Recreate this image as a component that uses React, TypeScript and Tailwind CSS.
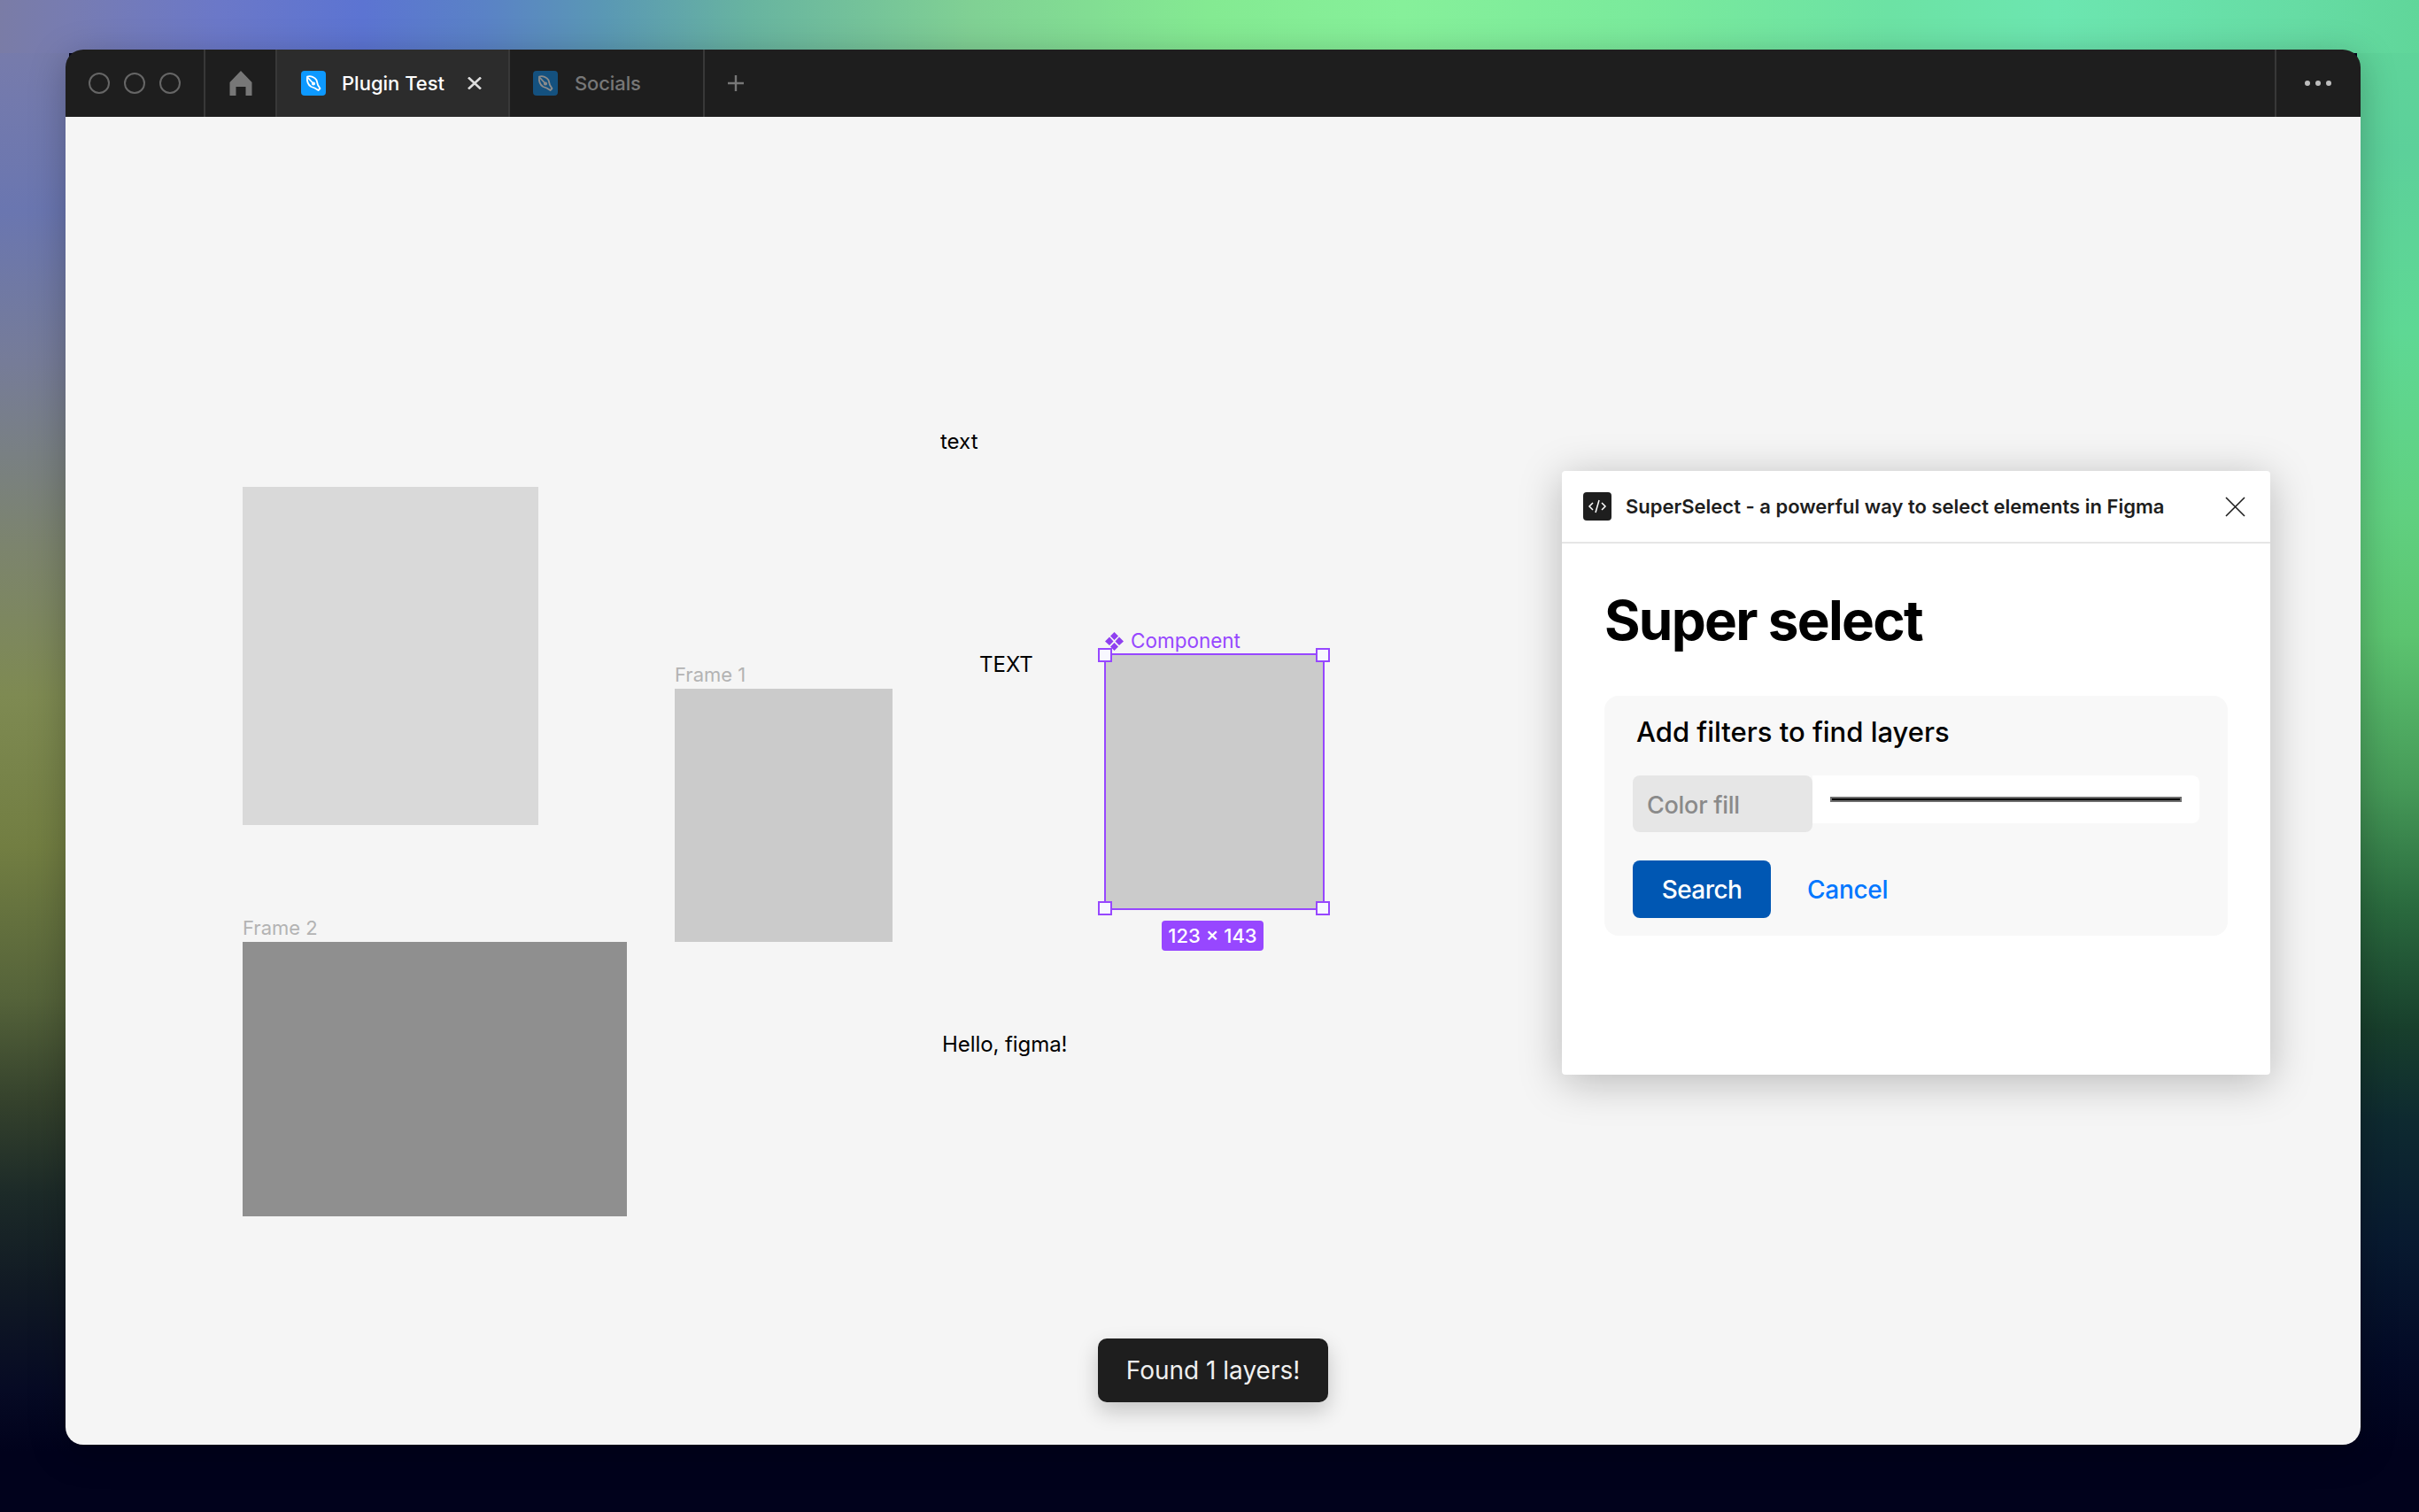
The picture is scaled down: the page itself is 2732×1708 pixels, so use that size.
const font = "font-['Inter','Liberation_Sans',sans-serif]";

function Feather({ dim }: { dim?: boolean }) {
  return (
    <div className={`w-[28px] h-[28px] rounded-[4px] flex items-center justify-center ${dim ? "bg-[#14517f]" : "bg-[#0d99ff]"}`}>
      <svg width="22" height="22" viewBox="0 0 22 22" fill="none" stroke={dim ? "#8c8c8c" : "#ffffff"} strokeWidth="1.8" strokeLinejoin="round" strokeLinecap="round">
        <path d="M4 3.5 C8 2.5 12.5 4 14.5 7.5 L16 13 L18.5 17 L16.5 19 L12.5 16.5 L8.5 15 C5 13 3.5 8 4 3.5 Z" />
        <path d="M5 5 L11 11.5" />
        <circle cx="11" cy="11.5" r="1.2" />
      </svg>
    </div>
  );
}

function Handle({ pos }: { pos: string }) {
  return <div className={`absolute w-[16px] h-[16px] bg-[#f8f8ff] border-2 border-[#9747ff] ${pos}`} />;
}

export default function App() {
  return (
    <div className={`relative w-[2732px] h-[1708px] overflow-hidden bg-[#01021c] ${font} bg-no-repeat [background-size:100%_60px,78px_100%,70px_100%] [background-position:0_0,0_0,100%_0] bg-[linear-gradient(90deg,#7a7ca6_0%,#777cb2_3%,#6b78c8_9%,#5c74d2_15%,#5a82c6_20%,#5a98b4_25%,#68b4a0_31%,#80d094_40%,#84ea92_50%,#86f09a_58%,#7aea9c_68%,#6ce2a4_78%,#6ce6b0_85%,#66dca4_95%,#60d69a_100%),linear-gradient(180deg,#7a7ca6_0%,#767bac_4%,#6a76b0_14%,#767c98_24%,#7c846e_36%,#7e8a52_46%,#727e42_56%,#55633a_66%,#34412c_73%,#1c2a28_79%,#111a24_85%,#060a24_92%,#01021c_96%),linear-gradient(180deg,#60d69a_0%,#5cd09a_10%,#5ed894_22%,#60d080_34%,#5cc470_42%,#469a58_52%,#2a6a3e_60%,#183f2c_68%,#0e2a30_74%,#081a30_82%,#030a26_90%,#01021c_96%)]`}>
      <div className="absolute left-[74px] top-[56px] w-[2592px] h-[1576px] rounded-[20px] overflow-hidden flex flex-col shadow-[0_8px_40px_rgba(0,0,0,0.25)]">
        <div className="h-[76px] bg-[#1e1e1e] flex items-stretch shrink-0 text-[22px]">
          <div className="w-[158px] flex items-center pl-[26px] gap-[16px] border-r-2 border-[#383838]">
            <div className="w-[24px] h-[24px] rounded-full border-2 border-[#666666]" />
            <div className="w-[24px] h-[24px] rounded-full border-2 border-[#666666]" />
            <div className="w-[24px] h-[24px] rounded-full border-2 border-[#666666]" />
          </div>
          <div className="w-[81px] flex items-center justify-center border-r-2 border-[#383838]">
            <svg width="26" height="28" viewBox="0 0 26 28" fill="#777777"><path fillRule="evenodd" d="M13 0 L25.5 13 V28 H18.5 V18 H7.5 V28 H0.5 V13 Z" /></svg>
          </div>
          <div className="w-[263px] bg-[#2c2c2c] flex items-center pl-[27px] border-r-2 border-[#383838]">
            <Feather />
            <span className="ml-[18px] w-[142px] font-medium text-white">Plugin Test</span>
            <svg width="16" height="14" viewBox="0 0 16 14" stroke="#dddddd" strokeWidth="2.6"><path d="M1 0.5 L15 13.5 M15 0.5 L1 13.5" /></svg>
          </div>
          <div className="w-[220px] flex items-center pl-[26px] border-r-2 border-[#383838]">
            <Feather dim />
            <span className="ml-[19px] font-medium text-[#777777] tracking-[-0.005em]">Socials</span>
          </div>
          <div className="flex-1 flex items-center pl-[25px] ">
            <svg width="20" height="20" viewBox="0 0 20 20" stroke="#777777" strokeWidth="2.4"><path d="M10 1 V19 M1 10 H19" /></svg>
          </div>
          <div className="w-[97px] flex items-center justify-center gap-[6px] border-l-2 border-[#383838] pr-[2px]">
            <div className="w-[6px] h-[6px] rounded-full bg-[#bdbdbd]" />
            <div className="w-[6px] h-[6px] rounded-full bg-[#bdbdbd]" />
            <div className="w-[6px] h-[6px] rounded-full bg-[#bdbdbd]" />
          </div>
        </div>
        <div className="relative flex-1 bg-[#f5f5f5]">
          {/* canvas items: coordinates relative to (74,132) */}
          <div className="absolute left-[200px] top-[418px] w-[334px] h-[382px] bg-[#d9d9d9]" />
          <div className="absolute left-[688px] top-[618px] text-[22px] leading-[24px] text-[#b3b3b3]">Frame 1</div>
          <div className="absolute left-[688px] top-[646px] w-[246px] h-[286px] bg-[#cbcbcb]" />
          <div className="absolute left-[200px] top-[904px] text-[22px] leading-[24px] text-[#b3b3b3]">Frame 2</div>
          <div className="absolute left-[200px] top-[932px] w-[434px] h-[310px] bg-[#8f8f8f]" />
          <div className="absolute left-[988px] top-[352px] text-[24px] leading-[30px] text-black">text</div>
          <div className="absolute left-[1032px] top-[604px] text-[24px] leading-[30px] text-black">TEXT</div>
          <div className="absolute left-[990px] top-[1033px] text-[24px] leading-[30px] text-black tracking-[-0.003em]">Hello, figma!</div>

          <div className="absolute left-[1174px] top-[580px] flex items-center gap-[8px] text-[22.5px] leading-[24px] text-[#9747ff]">
            <svg width="21" height="21" viewBox="0 0 21 21" fill="#8f3ff0"><path d="M10.5 0 L15 4.5 L10.5 9 L6 4.5 Z M16 5.5 L21 10.5 L16 15 L11.5 10.5 Z M5 5.5 L9.5 10.5 L5 15 L0 10.5 Z M10.5 12 L15 16.5 L10.5 21 L6 16.5 Z" /></svg>
            <span>Component</span>
          </div>
          <div className="absolute left-[1173px] top-[606px] w-[249px] h-[290px] bg-[#cbcbcb] border-2 border-[#9747ff]">
            <Handle pos="left-[-9px] top-[-8px]" />
            <Handle pos="right-[-8px] top-[-8px]" />
            <Handle pos="left-[-9px] bottom-[-8px]" />
            <Handle pos="right-[-8px] bottom-[-8px]" />
          </div>
          <div className="absolute left-[1238px] top-[908px] w-[115px] h-[34px] rounded-[4px] bg-[#9747ff] text-white text-[22px] font-medium flex items-center justify-center">123 × 143</div>

          <div className="absolute left-[1690px] top-[400px] w-[800px] h-[682px] bg-white rounded-[4px] shadow-[0_8px_48px_rgba(0,0,0,0.25)] flex flex-col">
            <div className="h-[82px] shrink-0 border-b-2 border-[#e6e6e6] flex items-center pl-[24px] pr-[28px]">
              <div className="w-[32px] h-[32px] rounded-[4px] bg-[#1e1e1e] flex items-center justify-center">
                <svg width="22" height="18" viewBox="0 0 22 18" fill="none" stroke="#ffffff" strokeWidth="1.5"><path d="M6 5 L2 9 L6 13 M16 5 L20 9 L16 13 M13 2 L9 16" /></svg>
              </div>
              <span className="ml-[16px] flex-1 text-[22px] font-semibold text-[#1e1e1e]">SuperSelect - a powerful way to select elements in Figma</span>
              <svg width="23" height="23" viewBox="0 0 23 23" stroke="#1e1e1e" strokeWidth="1.6"><path d="M1 1 L22 22 M22 1 L1 22" /></svg>
            </div>
            <div className="px-[48px] pt-[48px]">
              <div className="text-[62px] leading-[78px] font-bold text-black tracking-[-0.028em]">Super select</div>
              <div className="mt-[46px] w-[704px] h-[271px] rounded-[16px] bg-[#f8f8f8] pt-[21px] pl-[32px] pr-[32px]">
                <div className="pl-[4px] text-[31px] leading-[40px] font-medium text-black">Add filters to find layers</div>
                <div className="mt-[29px] flex items-start">
                  <div className="w-[203px] h-[64px] rounded-[8px] bg-[#e6e6e6] pl-[16px] pt-[6px] text-[27px] leading-[56px] font-medium text-[#8a8a8a] tracking-[-0.01em]">Color fill</div>
                  <div className="w-[437px] h-[54px] rounded-r-[8px] bg-white flex items-center px-[20px]">
                    <div className="w-full h-[6px] bg-[#000000] border-2 border-[#6e6e6e]" />
                  </div>
                </div>
                <div className="mt-[32px] flex items-center">
                  <div className="w-[156px] h-[65px] rounded-[8px] bg-[#0057b3] text-white text-[28px] font-medium tracking-[-0.02em] flex items-center justify-center">Search</div>
                  <div className="ml-[41px] text-[#0077ff] text-[28px] font-medium tracking-[-0.01em]">Cancel</div>
                </div>
              </div>
            </div>
          </div>

          <div className="absolute left-[1166px] top-[1380px] w-[260px] h-[72px] rounded-[10px] bg-[#1e1e1e] text-[#f0f0f0] text-[28px] flex items-center justify-center shadow-[0_10px_24px_rgba(0,0,0,0.2)]">Found 1 layers!</div>
        </div>
      </div>
    </div>
  );
}
